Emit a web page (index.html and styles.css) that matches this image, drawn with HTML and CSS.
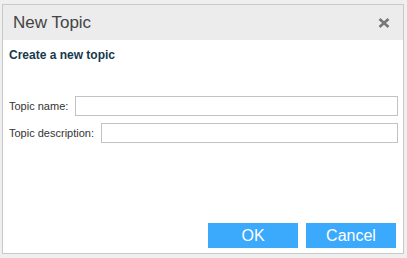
FILE: index.html
```html
<!DOCTYPE html>
<html lang="en">
<head>
    <meta charset="UTF-8">
    <title>New Topic</title>
    <link rel="stylesheet" href="styles.css">
</head>
<body>
    <div class="dialog">
        <div class="dialog-header">
            <span class="dialog-title">New Topic</span>
            <svg class="dialog-close" width="12" height="10" viewBox="0 0 12 10">
                <path d="M1.5 1 L10.5 9 M10.5 1 L1.5 9" stroke="#777" stroke-width="2.6"/>
            </svg>
        </div>
        <div class="dialog-body">
            <h3 class="intro">Create a new topic</h3>
            <div class="field">
                <label for="topicName">Topic name:</label>
                <input type="text" id="topicName">
            </div>
            <div class="field">
                <label for="topicDesc">Topic description:</label>
                <input type="text" id="topicDesc">
            </div>
        </div>
        <div class="dialog-footer">
            <button>OK</button>
            <button>Cancel</button>
        </div>
    </div>
</body>
</html>
```

FILE: styles.css
```css
body {
    margin: 0;
    padding: 4px 3px 4px 2px;
    background-color: #efefef;
    font-family: "Liberation Sans", Arial, sans-serif;
}
.dialog {
    width: 400px;
    height: 248px;
    border: 1px solid #c9c9c9;
    background-color: white;
    display: flex;
    flex-direction: column;
}
.dialog-header {
    height: 35px;
    background-color: #ececec;
    display: flex;
    align-items: center;
    justify-content: space-between;
    padding: 0 13px 0 10px;
}
.dialog-title {
    font-size: 17px;
    color: #444;
}
.dialog-close {
    display: block;
}
.dialog-body {
    flex: 1;
    padding: 0 5px 0 6px;
}
.intro {
    margin: 8px 0 34px;
    font-size: 12px;
    color: #17384d;
}
.field {
    display: flex;
    align-items: center;
    margin-bottom: 7px;
}
.field label {
    font-size: 11px;
    color: #333;
    margin-right: 7px;
}
.field input {
    flex: 1;
    height: 16px;
    border: 1px solid #c3c3c3;
    padding: 1px;
}
.dialog-footer {
    display: flex;
    justify-content: flex-end;
    gap: 8px;
    padding: 0 7px 5px 0;
}
button {
    width: 90px;
    height: 25px;
    border: none;
    background-color: #3ba9fc;
    color: white;
    font-family: "Liberation Sans", Arial, sans-serif;
    font-size: 16px;
    padding: 0;
}
```
